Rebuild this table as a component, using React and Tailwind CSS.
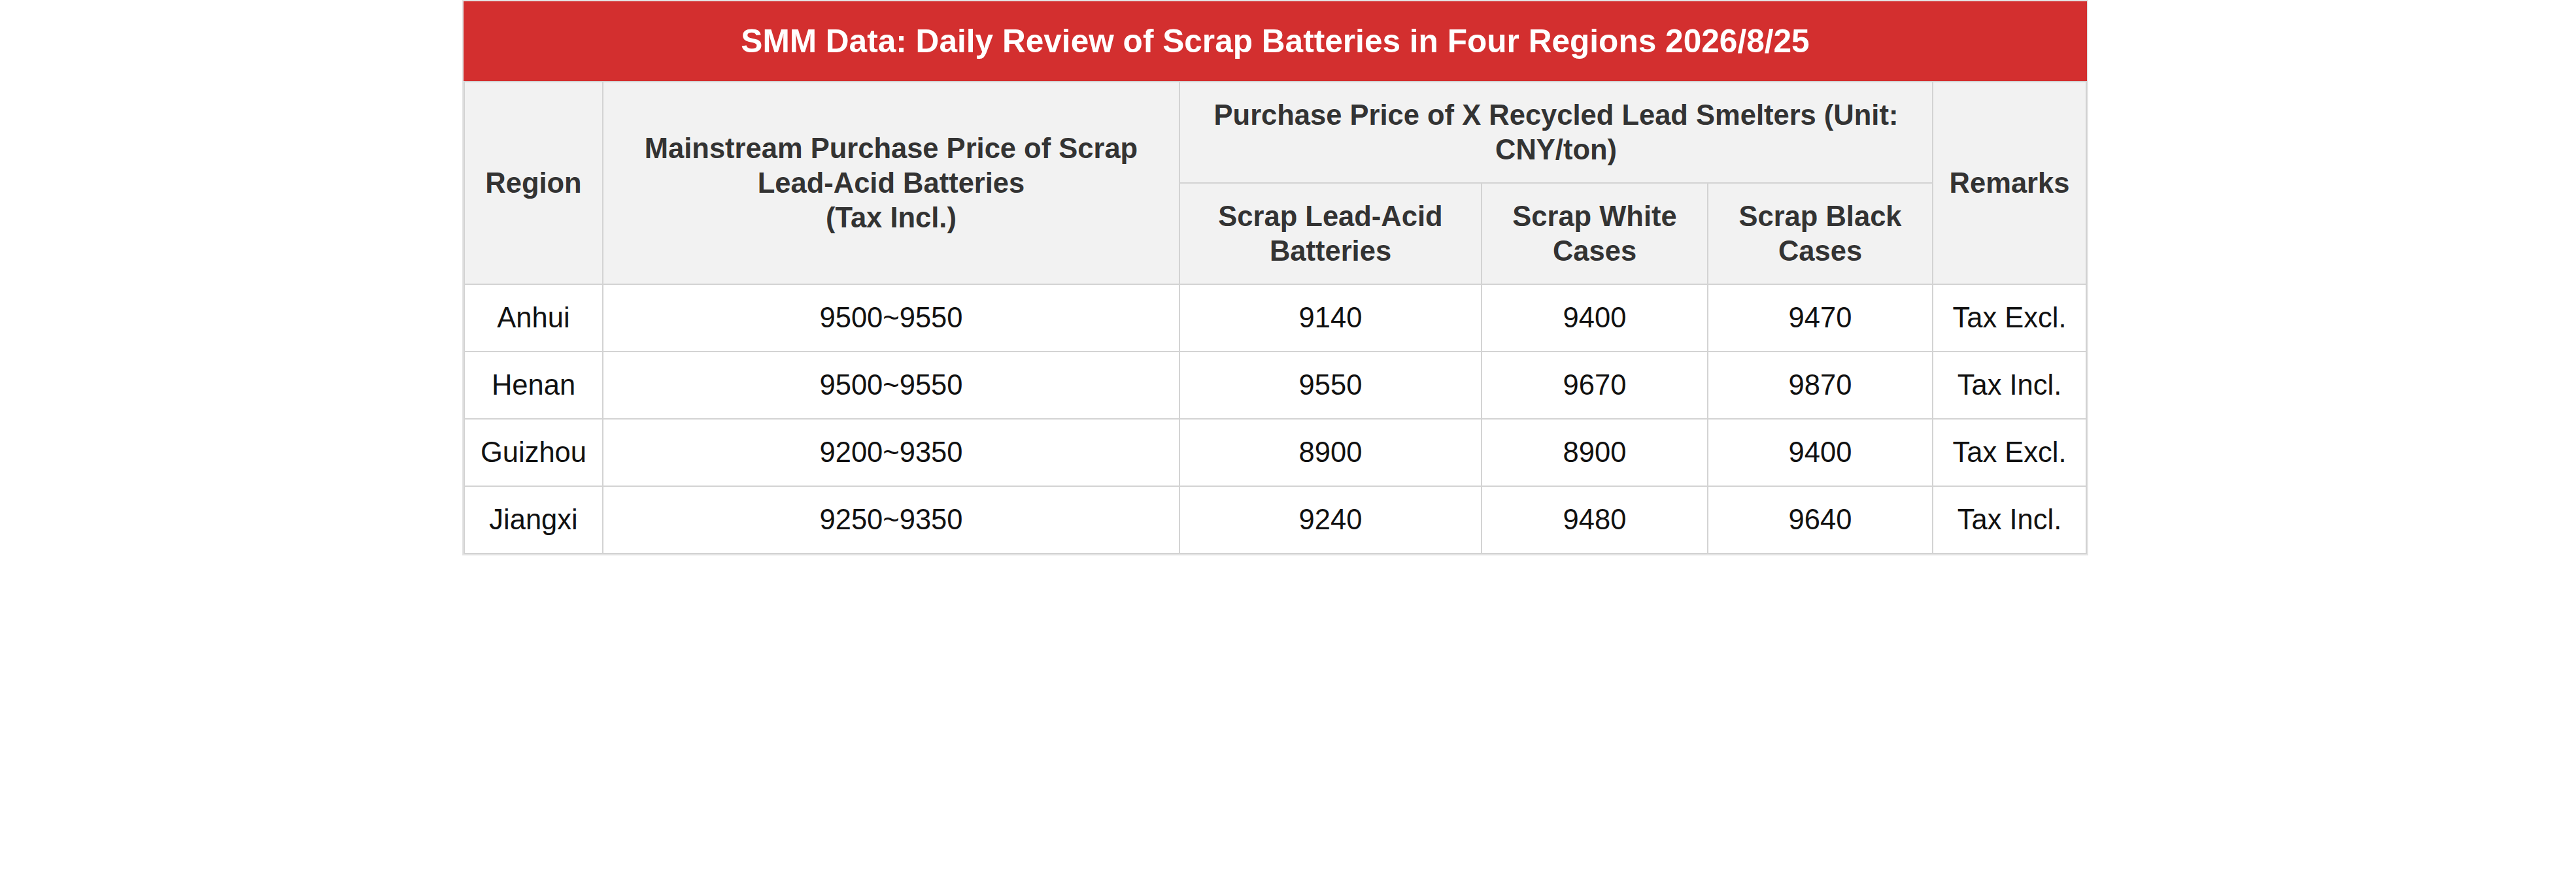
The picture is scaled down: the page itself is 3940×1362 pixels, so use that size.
const rows = [
  { region: "Anhui", mainstream: "9500~9550", lead: "9140", white: "9400", black: "9470", remark: "Tax Excl." },
  { region: "Henan", mainstream: "9500~9550", lead: "9550", white: "9670", black: "9870", remark: "Tax Incl." },
  { region: "Guizhou", mainstream: "9200~9350", lead: "8900", white: "8900", black: "9400", remark: "Tax Excl." },
  { region: "Jiangxi", mainstream: "9250~9350", lead: "9240", white: "9480", black: "9640", remark: "Tax Incl." },
];

const th = "border-2 border-[#d3d3d3] bg-[#f2f2f2] px-[22px] py-[23.5px] text-center align-middle font-bold text-[#333333]";
const td = "border-2 border-[#d3d3d3] px-[22px] py-[24px] text-center align-middle text-[#111111]";

export default function App() {
  return (
    <div className="min-h-screen w-full bg-white font-['Liberation_Sans',Arial,sans-serif]">
      <div className="ml-[707px] w-[2487px] border-2 border-[#e4e4e4]">
        <div className="flex h-[122px] items-center justify-center bg-[#d32f2f] text-[49.6px] font-bold text-white">
          SMM Data: Daily Review of Scrap Batteries in Four Regions 2026/8/25
        </div>
        <table className="w-full table-fixed border-collapse text-[43.5px] leading-[53px]">
          <colgroup>
            <col className="w-[212px]" />
            <col className="w-[882px]" />
            <col className="w-[462px]" />
            <col className="w-[346px]" />
            <col className="w-[344px]" />
            <col />
          </colgroup>
          <thead>
            <tr>
              <th rowSpan={2} className={th}>Region</th>
              <th rowSpan={2} className={th}>
                Mainstream Purchase Price of Scrap Lead-Acid Batteries
                <br />
                (Tax Incl.)
              </th>
              <th colSpan={3} className={th}>Purchase Price of X Recycled Lead Smelters (Unit: CNY/ton)</th>
              <th rowSpan={2} className={th}>Remarks</th>
            </tr>
            <tr>
              <th className={th}>Scrap Lead-Acid Batteries</th>
              <th className={th}>Scrap White Cases</th>
              <th className={th}>Scrap Black Cases</th>
            </tr>
          </thead>
          <tbody>
            {rows.map((row) => (
              <tr key={row.region}>
                <td className={td}>{row.region}</td>
                <td className={td}>{row.mainstream}</td>
                <td className={td}>{row.lead}</td>
                <td className={td}>{row.white}</td>
                <td className={td}>{row.black}</td>
                <td className={td}>{row.remark}</td>
              </tr>
            ))}
          </tbody>
        </table>
      </div>
    </div>
  );
}
